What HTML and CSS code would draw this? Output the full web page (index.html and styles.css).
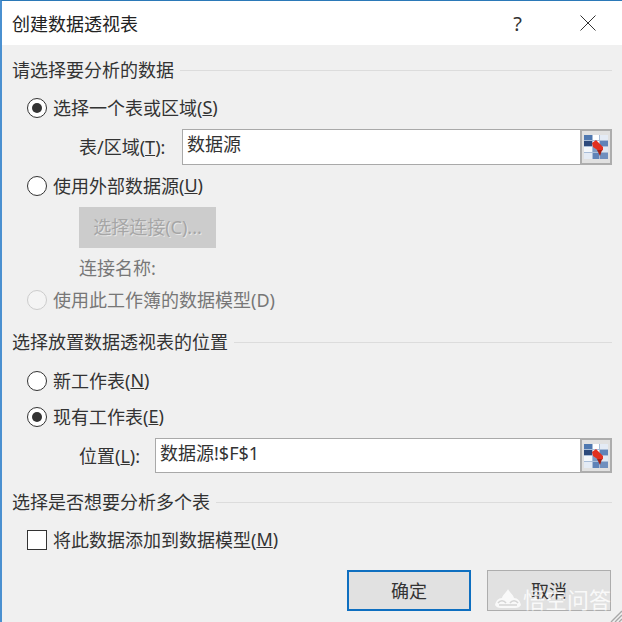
FILE: index.html
```html
<!DOCTYPE html>
<html lang="zh-CN">

<head>
  <meta charset="UTF-8">
  <title>创建数据透视表</title>
  <link rel="stylesheet" href="styles.css">
</head>

<body>
  <svg class="defs" width="0" height="0">
    <symbol id="range-icon" viewBox="0 0 24 24">
      <rect width="24" height="24" fill="#a9bdd8" />
      <!-- grid cells -->
      <rect x="0" y="0" width="8" height="5" fill="#4f78b0" />
      <rect x="9" y="0" width="6" height="5" fill="#ffffff" />
      <rect x="16" y="0" width="8" height="5" fill="#e4ebf5" />
      <rect x="0" y="6" width="8" height="5" fill="#2d4a7c" />
      <rect x="9" y="6" width="6" height="5" fill="#ffffff" />
      <rect x="16" y="6" width="8" height="5" fill="#5f83b8" />
      <rect x="0" y="12" width="8" height="5" fill="#f4f7fb" />
      <rect x="9" y="12" width="6" height="5" fill="#7d9ac4" />
      <rect x="16" y="12" width="8" height="5" fill="#dfe7f2" />
      <rect x="0" y="18" width="8" height="6" fill="#e4ebf5" />
      <rect x="9" y="18" width="6" height="6" fill="#5f83b8" />
      <rect x="16" y="18" width="8" height="6" fill="#6f8fbe" />
      <!-- red arrow -->
      <path d="M8 8L12 5L19 12L19 15L16 17L12 14L9 12Z" fill="#e2301f" />
      <path d="M13 15L16 21L18 15Z" fill="#a52014" />
    </symbol>
  </svg>

  <div class="dialog">
    <div class="titlebar">
      <span class="title">创建数据透视表</span>
      <span class="help">?</span>
      <svg class="close" width="16" height="16" viewBox="0 0 16 16">
        <path d="M0.5 0.5L15.5 15.5M15.5 0.5L0.5 15.5" stroke="#333" stroke-width="1" fill="none" />
      </svg>
    </div>

    <div class="content">
      <div class="legend first"><span>请选择要分析的数据</span></div>

      <div class="option option-a"><span class="radio checked"></span>选择一个表或区域(<u>S</u>)</div>
      <div class="field field-a">
        <label class="field-label label-wide">表/区域(<u>T</u>):</label>
        <div class="input">数据源</div>
        <div class="picker"><svg width="24" height="24"><use href="#range-icon" /></svg></div>
      </div>

      <div class="option option-b"><span class="radio"></span>使用外部数据源(<u>U</u>)</div>
      <div class="connect">
        <div class="connect-btn">选择连接(C)...</div>
        <div class="connect-name">连接名称:</div>
      </div>
      <div class="option option-c disabled"><span class="radio"></span>使用此工作簿的数据模型(D)</div>

      <div class="legend second"><span>选择放置数据透视表的位置</span></div>

      <div class="option option-d"><span class="radio"></span>新工作表(<u>N</u>)</div>
      <div class="option option-e"><span class="radio checked"></span>现有工作表(<u>E</u>)</div>
      <div class="field field-b">
        <label class="field-label label-narrow">位置(<u>L</u>):</label>
        <div class="input">数据源!$F$1</div>
        <div class="picker"><svg width="24" height="24"><use href="#range-icon" /></svg></div>
      </div>

      <div class="legend third"><span>选择是否想要分析多个表</span></div>

      <div class="option option-f"><span class="checkbox"></span>将此数据添加到数据模型(<u>M</u>)</div>

      <div class="actions">
        <button class="btn btn-default">确定</button>
        <button class="btn">取消</button>
      </div>
    </div>

    <div class="watermark">
      <svg width="26" height="20" viewBox="0 0 26 20">
        <path d="M13 0C12 3 8 5 7 9C3 9 1 12 0 16C1 18 3 19 6 19H20C23 19 25 18 26 16C25 12 23 9 19 9C18 5 14 3 13 0Z" fill="#fff" />
        <path d="M3 14C5 11 9 11 11 14M15 14C17 11 21 11 23 14M4 16H22" stroke="#d4d4d4" stroke-width="1.5" fill="none" />
      </svg>
      <span>悟空问答</span>
    </div>
    <svg class="grip" width="12" height="12" viewBox="0 0 12 12">
      <path d="M12 1L1 12M12 5L5 12M12 9L9 12" stroke="#a8a8a8" stroke-width="1.4" fill="none" />
    </svg>
  </div>
</body>

</html>
```

FILE: styles.css
```css
* {
  box-sizing: border-box;
}

body {
  margin: 0;
  font-family: "Noto Sans", "Noto Sans CJK SC", sans-serif;
  font-size: 18px;
  color: #333;
}

.defs {
  display: block;
}

.dialog {
  position: relative;
  width: 622px;
  height: 622px;
  overflow: hidden;
  background-color: #f0f0f0;
  border-top: 1px solid #2b79b8;
  border-left: 2px solid #4a90d0;
}

.titlebar {
  display: flex;
  align-items: center;
  height: 44px;
  padding-left: 10px;
  background-color: #fff;
}

.title {
  flex: 1;
  color: #222;
}

.help {
  margin-right: 58px;
  font-size: 20px;
}

.close {
  margin-right: 26px;
}

.content {
  padding: 0 10px 0 10px;
}

.legend {
  display: flex;
  align-items: center;
  height: 24px;
  line-height: 24px;
}

.legend::after {
  content: "";
  flex: 1;
  height: 1px;
  margin-left: 6px;
  background-color: #dcdcdc;
}

.first {
  margin-top: 13px;
}

.second {
  margin-top: 18px;
}

.third {
  margin-top: 17px;
}

.option {
  display: flex;
  align-items: center;
  height: 24px;
  padding-left: 15px;
  padding-bottom: 2px;
}

.option-a {
  margin-top: 14px;
}

.option-b {
  margin-top: 9px;
}

.option-c {
  margin-top: 8px;
}

.option-d {
  margin-top: 15px;
}

.option-e {
  margin-top: 12px;
}

.option-f {
  margin-top: 14px;
}

.disabled {
  color: #777;
}

.radio {
  display: flex;
  align-items: center;
  justify-content: center;
  width: 20px;
  height: 20px;
  margin-top: 2px;
  margin-right: 6px;
  background-color: #fff;
  border: 1.5px solid #333;
  border-radius: 50%;
}

.checked::after {
  content: "";
  width: 10px;
  height: 10px;
  background-color: #333;
  border-radius: 50%;
}

.disabled .radio {
  background-color: #f4f4f4;
  border-color: #ccc;
}

.checkbox {
  width: 20px;
  height: 20px;
  margin-top: 2px;
  margin-right: 6px;
  background-color: #fff;
  border: 1.5px solid #333;
}

.field {
  display: flex;
  align-items: center;
  padding-left: 67px;
}

.field-a {
  height: 36px;
  margin-top: 9px;
}

.field-b {
  height: 35px;
  margin-top: 9px;
}

.field-label {
  padding-bottom: 2px;
}

.label-wide {
  width: 103px;
}

.label-narrow {
  width: 76px;
}

.input {
  flex: 1;
  height: 100%;
  padding-left: 4px;
  line-height: 28px;
  background-color: #fff;
  border: 1.5px solid #a9a9a9;
  border-right: 0;
}

.picker {
  display: flex;
  align-items: center;
  justify-content: center;
  width: 32px;
  height: 100%;
  background-color: #e1e1e1;
  border: 2px solid #adadad;
}

.connect {
  padding-left: 67px;
}

.connect-btn {
  width: 137px;
  height: 41px;
  margin-top: 9px;
  line-height: 41px;
  text-align: center;
  color: #a6a6a6;
  background-color: #cccccc;
  text-shadow: 1px 1px 0 #e6e6e6;
}

.connect-name {
  height: 24px;
  margin-top: 8px;
  line-height: 24px;
  color: #777;
}

.actions {
  display: flex;
  justify-content: flex-end;
  gap: 16px;
  margin-top: 18px;
  padding-right: 1px;
}

.btn {
  width: 124px;
  height: 41px;
  padding: 0 0 2px;
  font: inherit;
  color: #333;
  background-color: #e1e1e1;
  border: 1px solid #adadad;
}

.btn-default {
  border: 2px solid #0e6fc0;
}

.watermark {
  position: absolute;
  right: 11px;
  bottom: 11px;
  display: flex;
  align-items: center;
  gap: 2px;
  font-size: 22px;
  line-height: 24px;
  color: #fff;
  opacity: 0.8;
}

.grip {
  position: absolute;
  right: 0;
  bottom: 0;
}
```
